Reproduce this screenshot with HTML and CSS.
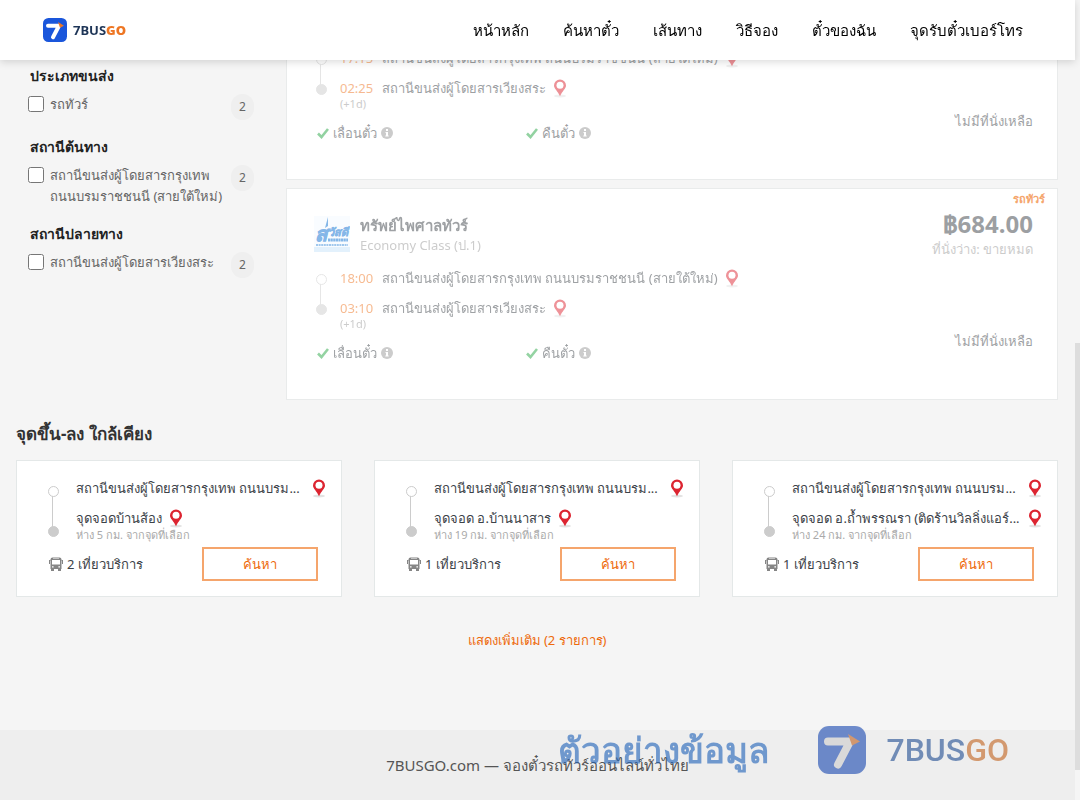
FILE: index.html
```html
<!DOCTYPE html>
<html lang="th">
<head>
  <meta charset="UTF-8">
  <meta name="viewport" content="width=device-width, initial-scale=1.0">
  <title>7BUSGO</title>
  <link rel="stylesheet" href="styles.css">
</head>
<body>
  <!-- shared icons -->
  <svg class="sprite" aria-hidden="true">
    <symbol id="logo" viewBox="0 0 48 48">
      <rect width="48" height="48" rx="11" fill="#1a56db"/>
      <path d="M10 15.500H32L20 38.500" fill="none" stroke="#fff" stroke-width="8" stroke-linecap="round" stroke-linejoin="round"/>
      <path d="M30 8l12 7.500-8 4z" fill="#ee7623"/>
    </symbol>
    <symbol id="pin" viewBox="0 0 14 19">
      <ellipse cx="7" cy="17" rx="6" ry="1.500" fill="#e2e2e2"/>
      <path d="M7 0.500a6 6 0 0 0-6 6c0 3.200 3.800 5.500 6 10.800 2.200-5.300 6-7.600 6-10.800a6 6 0 0 0-6-6z" fill="#dc2430"/>
      <circle cx="7" cy="6.300" r="3.500" fill="#fff"/>
    </symbol>
    <symbol id="check" viewBox="0 0 12 12">
      <path d="M1 6.500l3.500 3.500L11 2" fill="none" stroke="#28a745" stroke-width="2.600"/>
    </symbol>
    <symbol id="info" viewBox="0 0 12 12">
      <circle cx="6" cy="6" r="6" fill="#999"/>
      <path d="M5 2h2v2H5zM4.500 5H7v3.500h.7v1H4.300v-1H5V6h-.5z" fill="#fff"/>
    </symbol>
    <symbol id="bus" viewBox="0 0 14 15">
      <path d="M3.500 .5h7Q12.500.5 12.500 2.500v9.500h-11V2.500Q1.500.5 3.500.5z" fill="#858585"/>
      <path d="M3 3h8v4.500H3z" fill="#fff"/>
      <path d="M4 1.500h6v.6H4zM3 9.200h1.600v1.200H3zM9.400 9.200H11v1.200H9.400z" fill="#fff"/>
      <path d="M0 3h1.500v1H1v3H0zM14 3h-1.500v1h.5v3h1zM2 12h3v2H2zM9 12h3v2H9z" fill="#858585"/>
    </symbol>
  </svg>

  <header class="header">
    <a class="brand" href="#">
      <svg class="brand-icon"><use href="#logo"/></svg>
      <span>7BUS<b>GO</b></span>
    </a>
    <nav class="menu">
      <a href="#">หน้าหลัก</a>
      <a href="#">ค้นหาตั๋ว</a>
      <a href="#">เส้นทาง</a>
      <a href="#">วิธีจอง</a>
      <a href="#">ตั๋วของฉัน</a>
      <a href="#">จุดรับตั๋วเบอร์โทร</a>
    </nav>
  </header>

  <main class="container">
    <div class="search">
      <aside class="filters">
        <h3>ประเภทขนส่ง</h3>
        <label class="filter"><input type="checkbox"><span class="name">รถทัวร์</span><span class="count">2</span></label>
        <h3>สถานีต้นทาง</h3>
        <label class="filter"><input type="checkbox"><span class="name">สถานีขนส่งผู้โดยสารกรุงเทพ ถนนบรมราชชนนี (สายใต้ใหม่)</span><span class="count">2</span></label>
        <h3>สถานีปลายทาง</h3>
        <label class="filter"><input type="checkbox"><span class="name">สถานีขนส่งผู้โดยสารเวียงสระ</span><span class="count">2</span></label>
      </aside>

      <section class="results">
        <article class="trip trip-first">
          <div class="trip-info">
            <ul class="route">
              <li><time>17:15</time><span>สถานีขนส่งผู้โดยสารกรุงเทพ ถนนบรมราชชนนี (สายใต้ใหม่)</span><svg class="pin"><use href="#pin"/></svg></li>
              <li><time>02:25</time><span>สถานีขนส่งผู้โดยสารเวียงสระ</span><svg class="pin"><use href="#pin"/></svg></li>
            </ul>
            <div class="day">(+1d)</div>
            <div class="options">
              <span><svg class="mark"><use href="#check"/></svg>เลื่อนตั๋ว<svg class="mark"><use href="#info"/></svg></span>
              <span><svg class="mark"><use href="#check"/></svg>คืนตั๋ว<svg class="mark"><use href="#info"/></svg></span>
            </div>
          </div>
          <div class="trip-side">
            <div class="full">ไม่มีที่นั่งเหลือ</div>
          </div>
        </article>

        <article class="trip">
          <span class="type">รถทัวร์</span>
          <div class="trip-info">
            <div class="operator">
              <svg class="operator-logo" viewBox="0 0 36 36">
                <rect width="36" height="36" fill="#f2f9ff"/>
                <rect y="31" width="36" height="5" fill="#c6e2f8"/>
                <g fill="#0a6fd0" stroke="#0a6fd0" font-weight="bold" font-style="italic">
                  <text x="1" y="25" font-size="20" stroke-width=".8">ส</text>
                  <text x="14" y="20" font-size="11" stroke-width=".5">วัสดี</text>
                </g>
                <path d="M11 12l3-11v9z" fill="#0a6fd0"/>
                <path d="M14 24h20" stroke="#0a6fd0" stroke-width="3" stroke-dasharray="2.200 .4"/>
                <path d="M2 29h32" stroke="#0a6fd0" stroke-width="1.500" stroke-dasharray="2 .6"/>
              </svg>
              <div>
                <h4>ทรัพย์ไพศาลทัวร์</h4>
                <p>Economy Class (ป.1)</p>
              </div>
            </div>
            <ul class="route">
              <li><time>18:00</time><span>สถานีขนส่งผู้โดยสารกรุงเทพ ถนนบรมราชชนนี (สายใต้ใหม่)</span><svg class="pin"><use href="#pin"/></svg></li>
              <li><time>03:10</time><span>สถานีขนส่งผู้โดยสารเวียงสระ</span><svg class="pin"><use href="#pin"/></svg></li>
            </ul>
            <div class="day">(+1d)</div>
            <div class="options">
              <span><svg class="mark"><use href="#check"/></svg>เลื่อนตั๋ว<svg class="mark"><use href="#info"/></svg></span>
              <span><svg class="mark"><use href="#check"/></svg>คืนตั๋ว<svg class="mark"><use href="#info"/></svg></span>
            </div>
          </div>
          <div class="trip-side">
            <div>
              <div class="price">฿684.00</div>
              <div class="seats">ที่นั่งว่าง: ขายหมด</div>
            </div>
            <div class="full">ไม่มีที่นั่งเหลือ</div>
          </div>
        </article>
      </section>
    </div>

    <h2>จุดขึ้น-ลง ใกล้เคียง</h2>
    <section class="nearby">
      <article class="stop">
        <ul class="route">
          <li class="long"><span>สถานีขนส่งผู้โดยสารกรุงเทพ ถนนบรม...</span><svg class="pin"><use href="#pin"/></svg></li>
          <li><span>จุดจอดบ้านส้อง</span><svg class="pin"><use href="#pin"/></svg></li>
        </ul>
        <p class="distance">ห่าง 5 กม. จากจุดที่เลือก</p>
        <div class="stop-foot">
          <span class="services"><svg class="bus"><use href="#bus"/></svg>2 เที่ยวบริการ</span>
          <button type="button">ค้นหา</button>
        </div>
      </article>
      <article class="stop">
        <ul class="route">
          <li class="long"><span>สถานีขนส่งผู้โดยสารกรุงเทพ ถนนบรม...</span><svg class="pin"><use href="#pin"/></svg></li>
          <li><span>จุดจอด อ.บ้านนาสาร</span><svg class="pin"><use href="#pin"/></svg></li>
        </ul>
        <p class="distance">ห่าง 19 กม. จากจุดที่เลือก</p>
        <div class="stop-foot">
          <span class="services"><svg class="bus"><use href="#bus"/></svg>1 เที่ยวบริการ</span>
          <button type="button">ค้นหา</button>
        </div>
      </article>
      <article class="stop">
        <ul class="route">
          <li class="long"><span>สถานีขนส่งผู้โดยสารกรุงเทพ ถนนบรม...</span><svg class="pin"><use href="#pin"/></svg></li>
          <li class="long"><span>จุดจอด อ.ถ้ำพรรณรา (ติดร้านวิลลิ่งแอร์...</span><svg class="pin"><use href="#pin"/></svg></li>
        </ul>
        <p class="distance">ห่าง 24 กม. จากจุดที่เลือก</p>
        <div class="stop-foot">
          <span class="services"><svg class="bus"><use href="#bus"/></svg>1 เที่ยวบริการ</span>
          <button type="button">ค้นหา</button>
        </div>
      </article>
    </section>
    <a class="more" href="#">แสดงเพิ่มเติม (2 รายการ)</a>
  </main>

  <footer class="footer">7BUSGO.com — จองตั๋วรถทัวร์ออนไลน์ทั่วไทย</footer>

  <div class="watermark">
    <span class="sample">ตัวอย่างข้อมูล</span>
    <svg class="watermark-icon"><use href="#logo"/></svg>
    <span class="watermark-name">7BUS<b>GO</b></span>
  </div>
  <div class="scrollbar"></div>
</body>
</html>
```
FILE: styles.css
```css
* {
  box-sizing: border-box;
}
body {
  margin: 0;
  padding-right: 5px;
  min-height: 100vh;
  display: flex;
  flex-direction: column;
  background: #f5f5f5;
  color: #3c4248;
  font-family: "Noto Sans", "Open Sans", sans-serif;
  font-size: 13px;
  line-height: 20px;
}
h2, h3, h4, p, ul {
  margin: 0;
  padding: 0;
}
a {
  text-decoration: none;
}
.sprite {
  position: absolute;
  width: 0;
  height: 0;
}

/* header */
.header {
  position: fixed;
  top: 0;
  left: 0;
  right: 5px;
  z-index: 5;
  height: 60px;
  padding: 0 52px 0 43px;
  display: flex;
  align-items: center;
  justify-content: space-between;
  background: #fff;
  box-shadow: 0 2px 8px rgba(0,0,0,0.15);
}
.brand {
  display: flex;
  align-items: center;
  gap: 6px;
  color: #1e3557;
  font-size: 13px;
  font-weight: bold;
}
.brand b {
  color: #ee7623;
}
.brand-icon {
  width: 24px;
  height: 24px;
}
.menu {
  display: flex;
  gap: 34px;
}
.menu a {
  color: #000;
  font-size: 15px;
}

/* filters */
.container {
  flex: 1;
  padding: 42px 17px 0 16px;
}
.search {
  display: flex;
}
.filters {
  flex: 0 0 270px;
  padding: 24px 32px 0 12px;
  color: #666;
}
.filters h3 {
  margin-left: 2px;
  color: #222;
  font-size: 14px;
  line-height: 20px;
}
.filter {
  display: flex;
  align-items: flex-start;
  margin-bottom: 17px;
  padding-top: 8px;
  line-height: 21px;
}
.filter input {
  width: 16px;
  height: 16px;
  margin: 2px 6px 0 0;
}
.filter .name {
  flex: 1;
}
.filter .count {
  width: 23px;
  height: 26px;
  border-radius: 12px;
  background: #efefef;
  font-size: 12px;
  line-height: 26px;
  text-align: center;
}

/* trips */
.results {
  flex: 1;
  min-width: 0;
}
.trip {
  position: relative;
  display: flex;
  justify-content: space-between;
  margin-bottom: 8px;
  padding: 26px 24px 36px 27px;
  border: 1px solid #e9ebeb;
  background: #fff;
}
.trip-first {
  padding-top: 0;
}
.trip-info, .trip-side {
  opacity: 0.5;
}
.trip-info {
  flex: 1;
}
.trip-side {
  display: flex;
  flex-direction: column;
  justify-content: space-between;
  padding-bottom: 12px;
  text-align: right;
}
.trip-first .trip-side {
  justify-content: flex-end;
}
.type {
  position: absolute;
  top: 0;
  right: 12px;
  color: #f5a56c;
  font-size: 11px;
  font-weight: bold;
}
.operator {
  display: flex;
  gap: 10px;
  margin-bottom: 8px;
}
.operator-logo {
  width: 36px;
  height: 38px;
}
.operator h4 {
  font-size: 15px;
  line-height: 20px;
}
.operator p, .seats {
  color: #999;
  line-height: 20px;
}
.price {
  font-size: 24px;
  font-weight: bold;
  line-height: 18px;
}
.seats {
  margin-top: 6px;
}

/* route with the two joined dots */
.route {
  position: relative;
  list-style: none;
}
.route li {
  display: flex;
  align-items: center;
  height: 30px;
  padding-left: 26px;
}
.route li::before {
  content: "";
  position: absolute;
  left: 2px;
  top: 11px;
  width: 9px;
  height: 9px;
  border: 1px solid #ccc;
  border-radius: 50%;
  background: #fff;
}
.route li:last-child::before {
  top: 41px;
  background: #ccc;
}
.route::before {
  content: "";
  position: absolute;
  left: 6px;
  top: 20px;
  bottom: 18px;
  width: 1px;
  background: #ccc;
}
.route time {
  width: 42px;
  color: #ee7623;
}
.pin {
  flex: none;
  width: 14px;
  height: 19px;
  margin-left: 7px;
}
.day {
  margin-top: -5px;
  padding-left: 26px;
  color: #999;
  font-size: 11px;
  line-height: 12px;
}
.options {
  display: flex;
  margin: 13px 0 0 3px;
}
.options span {
  display: flex;
  align-items: center;
  gap: 4px;
  width: 209px;
}
.mark {
  width: 12px;
  height: 12px;
}

/* nearby stops */
h2 {
  margin-top: 15px;
  font-size: 17px;
  line-height: 22px;
  color: #333;
}
.nearby {
  display: grid;
  grid-template-columns: repeat(3, minmax(0, 1fr));
  gap: 32px;
  margin-top: 15px;
}
.stop {
  padding: 12px 23px 15px 29px;
  border: 1px solid #e4e8e8;
  background: #fff;
}
.stop .route {
  margin-right: -8px;
}
.stop .route li {
  padding-left: 30px;
  white-space: nowrap;
}
.stop .route li::before {
  top: 13px;
}
.stop .route li:last-child::before {
  top: 53px;
}
.stop .route::before {
  top: 22px;
  bottom: 6px;
}
.stop .long {
  justify-content: space-between;
}
.distance {
  margin-top: -4px;
  padding-left: 30px;
  color: #aaa;
  font-size: 11px;
  line-height: 12px;
}
.stop-foot {
  display: flex;
  align-items: center;
  justify-content: space-between;
  margin-top: 6px;
}
.services {
  display: flex;
  align-items: center;
  gap: 4px;
  padding-left: 3px;
}
.bus {
  width: 14px;
  height: 15px;
}
.stop button {
  width: 116px;
  height: 34px;
  border: 2px solid #f5a56c;
  background: #fff;
  color: #ee6a0c;
  font: inherit;
  cursor: pointer;
}
.more {
  display: block;
  width: fit-content;
  margin: 33px auto 60px;
  color: #ee6a0c;
}

/* footer */
.footer {
  padding: 24px;
  background: #eee;
  color: #555;
  font-size: 15px;
  line-height: 22px;
  text-align: center;
}

/* overlays */
.watermark {
  position: fixed;
  right: 71px;
  bottom: 26px;
  z-index: 6;
  display: flex;
  align-items: center;
  opacity: 0.6;
}
.sample {
  margin-right: 49px;
  color: #1b5fb8;
  font-size: 35px;
  font-weight: bold;
  line-height: 48px;
}
.watermark-icon {
  width: 48px;
  height: 48px;
  margin-right: 20px;
  filter: brightness(0.8);
}
.watermark-name {
  color: #1e4b91;
  font-family: Roboto, sans-serif;
  font-size: 32px;
  font-weight: 500;
}
.watermark-name b {
  color: #c1621c;
  font-weight: inherit;
}
.scrollbar {
  position: fixed;
  right: 0;
  top: 343px;
  width: 5px;
  height: 427px;
  z-index: 6;
  background: #ddd;
}
```
